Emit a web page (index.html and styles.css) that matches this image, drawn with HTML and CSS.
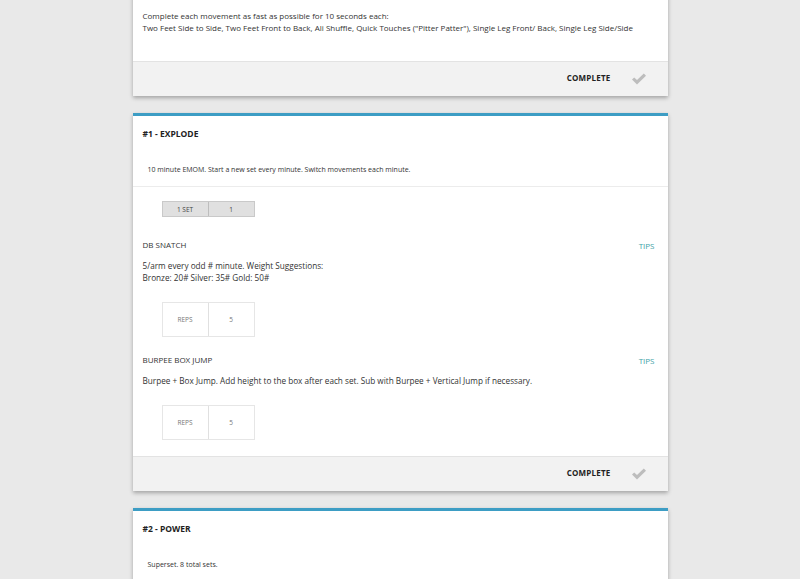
FILE: index.html
```html
<!DOCTYPE html>
<html lang="en">
<head>
  <meta charset="UTF-8" />
  <meta name="viewport" content="width=device-width, initial-scale=1.0"/>
  <title>Workout</title>
  <link rel="stylesheet" href="styles.css">
</head>
<body>
  <main class="workout">
    <section class="card card-warmup">
      <div class="card-body">
        <p class="notes">Complete each movement as fast as possible for 10 seconds each:<br>Two Feet Side to Side, Two Feet Front to Back, Ali Shuffle, Quick Touches ("Pitter Patter"), Single Leg Front/ Back, Single Leg Side/Side</p>
      </div>
      <div class="card-footer">
        <button class="complete-btn">COMPLETE</button>
        <svg class="check" viewBox="0 0 16 12" width="16" height="12"><path d="M1 6.5 L3.2 4.4 L6 7.1 L12.8 0.6 L15 2.7 L6 11.4 Z" fill="#bdbdbd"/></svg>
      </div>
    </section>

    <section class="card block">
      <header class="block-head">
        <h2>#1 - EXPLODE</h2>
        <p class="block-desc">10 minute EMOM. Start a new set every minute. Switch movements each minute.</p>
      </header>
      <div class="card-body">
        <div class="sets">
          <span>1 SET</span>
          <span>1</span>
        </div>

        <div class="movement">
          <div class="movement-head">
            <h3>DB SNATCH</h3>
            <a class="tips" href="#">TIPS</a>
          </div>
          <p class="movement-desc">5/arm every odd # minute. Weight Suggestions:<br>Bronze: 20# Silver: 35# Gold: 50#</p>
          <div class="reps">
            <span>REPS</span>
            <span>5</span>
          </div>
        </div>

        <div class="movement">
          <div class="movement-head">
            <h3>BURPEE BOX JUMP</h3>
            <a class="tips" href="#">TIPS</a>
          </div>
          <p class="movement-desc">Burpee + Box Jump. Add height to the box after each set. Sub with Burpee + Vertical Jump if necessary.</p>
          <div class="reps">
            <span>REPS</span>
            <span>5</span>
          </div>
        </div>
      </div>
      <div class="card-footer">
        <button class="complete-btn">COMPLETE</button>
        <svg class="check" viewBox="0 0 16 12" width="16" height="12"><path d="M1 6.5 L3.2 4.4 L6 7.1 L12.8 0.6 L15 2.7 L6 11.4 Z" fill="#bdbdbd"/></svg>
      </div>
    </section>

    <section class="card block card-last">
      <header class="block-head">
        <h2>#2 - POWER</h2>
        <p class="block-desc">Superset. 8 total sets.</p>
      </header>
    </section>
  </main>
</body>
</html>
```

FILE: styles.css
```css
body {
  margin: 0;
  background: #e9e9e9;
  font-family: 'Open Sans', sans-serif;
  color: #333;
}

.workout {
  width: 535px;
  margin: -20px auto 0;
  display: flex;
  flex-direction: column;
  gap: 17px;
}

.card {
  background: #fff;
  box-shadow: 0 2px 4px rgba(0, 0, 0, 0.3);
}

.block {
  border-top: 3px solid #3d9dc4;
}

.card-last {
  padding-bottom: 40px;
}

.card-body {
  padding: 10px 13px 16px 10px;
}

.card-warmup .card-body {
  padding-top: 30px;
  padding-bottom: 27px;
}

.notes {
  margin: 0;
  font-size: 8px;
  line-height: 12px;
  color: #333;
}

.card-footer {
  height: 33px;
  padding-bottom: 1px;
  background: #f2f2f2;
  border-top: 1px solid #e3e3e3;
  display: flex;
  align-items: center;
  justify-content: flex-end;
  gap: 20px;
  padding-right: 21px;
}

.complete-btn {
  background: none;
  border: none;
  padding: 0 0 2px;
  font-family: inherit;
  font-size: 8px;
  font-weight: bold;
  color: #222;
  letter-spacing: 0.2px;
}

.block-head {
  padding: 12px 10px 11px;
  border-bottom: 1px solid #ececec;
}

.block-head h2 {
  margin: 0;
  font-size: 8.5px;
  line-height: 12px;
  font-weight: bold;
  color: #222;
}

.block-desc {
  margin: 25px 0 0 5px;
  font-size: 7px;
  line-height: 10px;
  color: #333;
}

.sets, .reps {
  display: flex;
  margin-left: 19px;
  width: 93px;
}

.sets {
  margin-top: 4px;
  height: 16px;
  background: #e0e0e0;
  border: 1px solid #c9c9c9;
  box-sizing: border-box;
}

.sets span, .reps span {
  flex: 1;
  display: flex;
  align-items: center;
  justify-content: center;
  font-size: 6.5px;
  color: #444;
}

.sets span + span {
  border-left: 1px solid #bdbdbd;
}

.reps {
  height: 35px;
  border: 1px solid #e6e6e6;
  box-sizing: border-box;
}

.reps span {
  color: #777;
}

.reps span + span {
  border-left: 1px solid #e0e0e0;
}

.movement {
  margin-top: 22px;
}

.movement + .movement {
  margin-top: 17px;
}

.movement-head {
  display: flex;
  justify-content: space-between;
  align-items: center;
}

.movement-head h3 {
  margin: 0;
  font-size: 8px;
  line-height: 12px;
  font-weight: normal;
  color: #333;
}

.tips {
  font-size: 8px;
  color: #3fa3a8;
  text-decoration: none;
}

.movement-desc {
  margin: 9px 0 18px;
  font-size: 8.2px;
  line-height: 12px;
  color: #333;
}
```
